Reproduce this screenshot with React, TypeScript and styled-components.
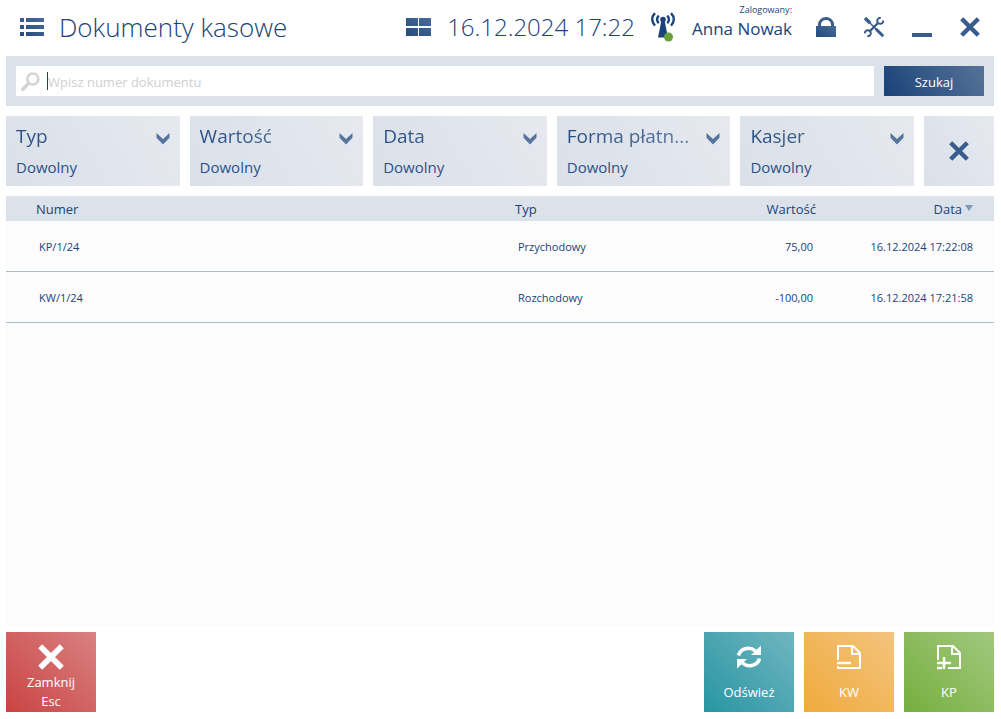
import React from 'react';
import styled, { createGlobalStyle } from 'styled-components';

const navy = '#1b4279';
const panel = '#dbe2ea';

const GlobalStyle = createGlobalStyle`
  *, *::before, *::after { box-sizing: border-box; }
  body {
    margin: 0;
    background: #fff;
    color: ${navy};
    font-family: "Open Sans", "Noto Sans", sans-serif;
    font-size: 13px;
  }
  button, input, select { font: inherit; color: inherit; }
`;

const Page = styled.div`
  min-height: 100vh;
  display: flex;
  flex-direction: column;
  padding: 0 7px 7px 6px;
`;

const Header = styled.header`
  height: 56px;
  display: flex;
  align-items: center;
  padding: 0 14px 2px;
`;

const Title = styled.h1`
  flex: 1;
  margin: 0 0 0 15px;
  font-size: 26px;
  line-height: 36px;
  font-weight: 300;
  white-space: nowrap;
`;

const Clock = styled.time`
  margin: 0 16px;
  font-size: 24px;
  line-height: 36px;
  font-weight: 300;
  white-space: nowrap;
`;

const User = styled.div`
  display: flex;
  flex-direction: column;
  align-items: flex-end;
  margin: 0 24px 0 16px;
  padding-bottom: 8px;
  white-space: nowrap;
`;

const UserCaption = styled.span`
  font-size: 9px;
  line-height: 12px;
`;

const UserName = styled.span`
  font-size: 17px;
  line-height: 26px;
`;

const WindowButtons = styled.div`
  display: flex;
  gap: 28px;
`;

const IconButton = styled.button`
  display: flex;
  padding: 0;
  border: 0;
  background: none;
  cursor: pointer;
`;

const SearchBar = styled.form`
  display: flex;
  gap: 10px;
  padding: 10px;
  background: ${panel};
`;

const SearchField = styled.label`
  flex: 1;
  display: flex;
  align-items: center;
  height: 30px;
  padding-left: 5px;
  background: #fff;
`;

const Caret = styled.span`
  width: 1px;
  height: 18px;
  margin-left: 7px;
  background: ${navy};
`;

const SearchInput = styled.input`
  flex: 1;
  min-width: 0;
  height: 30px;
  padding: 2px 0 0;
  border: 0;
  outline: 0;
  background: none;
  &::placeholder { color: #cfcfcf; opacity: 1; }
`;

const SearchButton = styled.button`
  width: 100px;
  padding: 2px 0 0;
  border: 0;
  color: #fff;
  background: linear-gradient(60deg, #1a4278, #567399);
  cursor: pointer;
`;

const Filters = styled.div`
  display: flex;
  gap: 10px;
  margin: 10px 0;
`;

const tileFill = 'linear-gradient(60deg, #dae1e9, #e0e4ec 50%, #e6e9ef)';

const FilterTile = styled.div`
  flex: 1;
  min-width: 0;
  height: 70px;
  display: grid;
  grid-template: 40px 22px / 1fr 14px;
  align-items: center;
  padding: 0 10px;
  background: ${tileFill};
`;

const FilterLabel = styled.label`
  overflow: hidden;
  font-size: 19px;
  line-height: 30px;
  white-space: nowrap;
  color: transparent;
  background: linear-gradient(90deg, #254b80, #6481a8);
  background-clip: text;
`;

const FilterSelect = styled.select`
  grid-column: 1 / 3;
  appearance: none;
  padding: 0;
  border: 0;
  background: none;
  color: #2c5186;
  font-size: 15px;
  line-height: 22px;
`;

const ChevronMark = styled.svg`
  margin-top: 6px;
`;

const ClearButton = styled.button`
  width: 70px;
  display: flex;
  align-items: center;
  justify-content: center;
  border: 0;
  background: ${tileFill};
  cursor: pointer;
`;

const List = styled.main`
  flex: 1;
  background: #fcfcfc;
`;

const Table = styled.table`
  width: 100%;
  table-layout: fixed;
  border-collapse: separate;
  border-spacing: 0;
`;

const Col = styled.col<{ $w?: number }>`
  width: ${p => (p.$w ? `${p.$w}px` : 'auto')};
`;

const Th = styled.th<{ $right?: boolean }>`
  height: 25px;
  padding: 0 ${p => (p.$right ? 8 : 0)}px 0 6px;
  background: ${panel};
  font-weight: 400;
  line-height: 18px;
  text-align: ${p => (p.$right ? 'right' : 'left')};
  &:first-child { padding-left: 30px; }
  &:last-child { padding-right: 21px; }
`;

const Td = styled.td<{ $right?: boolean }>`
  height: 51px;
  padding: 2px ${p => (p.$right ? 11 : 0)}px 0 9px;
  border-bottom: 1px solid #a9b9cc;
  font-size: 11px;
  line-height: 18px;
  text-align: ${p => (p.$right ? 'right' : 'left')};
  &:first-child { padding-left: 33px; }
  &:last-child { padding-right: 21px; }
`;

const SortMark = styled.svg`
  margin-left: 3px;
  vertical-align: 3px;
`;

const Footer = styled.footer`
  display: flex;
  gap: 10px;
  padding-top: 6px;
`;

const Spacer = styled.div`
  flex: 1;
`;

const Action = styled.button<{ $from: string; $to: string }>`
  width: 90px;
  height: 80px;
  display: flex;
  flex-direction: column;
  align-items: center;
  padding: 12px 0 0;
  border: 0;
  color: #fff;
  line-height: 19px;
  background: linear-gradient(45deg, ${p => p.$from}, ${p => p.$to});
  cursor: pointer;
`;

const ActionText = styled.span`
  flex: 1;
  display: flex;
  flex-direction: column;
  justify-content: center;
  padding-top: 2px;
`;

const Shade = ({ id }: { id: string }) => (
  <linearGradient id={id} x1="0" y1="1" x2="1" y2="0">
    <stop offset="0" stopColor="#234b80" />
    <stop offset="1" stopColor="#4a6b98" />
  </linearGradient>
);

const ListIcon = () => (
  <svg width="24" height="18" aria-hidden="true">
    <Shade id="g-list" />
    <path fill="url(#g-list)" d="M0 0h4v4H0zM6 0h18v4H6zM0 7h4v4H0zM6 7h18v4H6zM0 14h4v4H0zM6 14h18v4H6z" />
  </svg>
);

const GridIcon = () => (
  <svg width="25" height="18" aria-hidden="true">
    <Shade id="g-grid" />
    <path fill="url(#g-grid)" d="M0 0h12v8H0zM13 0h12v8H13zM0 10h12v8H0zM13 10h12v8H13z" />
  </svg>
);

const AntennaIcon = () => (
  <svg width="25" height="30" viewBox="0 0 25 30" aria-hidden="true">
    <g fill="none" stroke={navy} strokeWidth="2.400">
      <path d="M4 1.200C.3 4.800.3 10 4 13.600M20 1.200C23.700 4.800 23.700 10 20 13.600" />
      <path d="M7.800 3.600C5.500 5.800 5.500 9 7.800 11.200M16.200 3.600C18.500 5.800 18.500 9 16.200 11.200" />
    </g>
    <circle cx="12" cy="7.500" r="2.800" fill={navy} />
    <path d="M10.500 8h3L17 25.500H7z" fill={navy} />
    <circle cx="17.500" cy="25" r="4.500" fill="#69a039" />
  </svg>
);

const LockIcon = () => (
  <svg width="20" height="20" aria-hidden="true">
    <Shade id="g-lock" />
    <path d="M3.500 10V7.500a6.500 6 0 0 1 13 0V10" fill="none" stroke="#3a5d8e" strokeWidth="3" />
    <path d="M0 9h20v11H0z" fill="url(#g-lock)" />
  </svg>
);

const ToolsIcon = () => (
  <svg width="20" height="20" viewBox="0 0 20 20" aria-hidden="true">
    <g fill="none" stroke="#375b8d">
      <path d="M1 1l5 5" strokeWidth="3.400" />
      <path d="M5 5l8 8" strokeWidth="1.600" />
      <path d="M12.500 12.500l5.800 5.800" strokeWidth="3" strokeLinecap="round" />
      <path d="M5.500 14.500l9-9" strokeWidth="2.400" />
      <path d="M16.800.9a3 3 0 1 0 2.400 2.600M.8 16.400a3 3 0 1 1 2.500 2.800" strokeWidth="2" />
    </g>
  </svg>
);

const MinimizeIcon = () => (
  <svg width="20" height="20" aria-hidden="true">
    <path d="M0 16h20v4H0z" fill="#385c8e" />
  </svg>
);

const CrossIcon = ({ size, color }: { size: number; color: string }) => (
  <svg width={size} height={size} viewBox="0 0 20 20" aria-hidden="true">
    <path d="M1.700 1.700l16.600 16.600M18.300 1.700L1.700 18.300" stroke={color} strokeWidth="4.400" />
  </svg>
);

const SearchIcon = () => (
  <svg width="19" height="19" viewBox="0 0 19 19" aria-hidden="true">
    <circle cx="11.800" cy="7" r="5.500" fill="none" stroke="#d4d4d4" strokeWidth="2.600" />
    <path d="M7.500 11.500L1.800 17.200" stroke="#d4d4d4" strokeWidth="3.600" strokeLinecap="round" />
  </svg>
);

const Chevron = () => (
  <ChevronMark width="14" height="12" viewBox="0 0 14 12" aria-hidden="true">
    <path d="M.5 0L7 6l6.500-6v4.800L7 11.500.5 4.800z" fill="#56759e" />
  </ChevronMark>
);

const RefreshIcon = () => (
  <svg width="26" height="26" viewBox="0 0 26 26" aria-hidden="true">
    <path d="M2.500 11.500C4 5 13 1.500 19.500 7" fill="none" stroke="#fff" strokeWidth="3.600" />
    <path d="M25 1.500V11H15z" fill="#fff" />
    <path d="M23.500 14.500C22 21 13 24.500 6.500 19" fill="none" stroke="#fff" strokeWidth="3.600" />
    <path d="M1 24.500V15h10z" fill="#fff" />
  </svg>
);

const DocumentIcon = ({ plus }: { plus?: boolean }) => (
  <svg width="26" height="26" viewBox="0 0 26 26" fill="none" stroke="#fff" strokeWidth="2" aria-hidden="true">
    {plus ? (
      <>
        <path d="M2 16V2h15l7 7v15H12" />
        <path d="M1 19h14M8 13v12M1 24h5" strokeWidth="2.500" />
      </>
    ) : (
      <>
        <path d="M2 16V2h15l7 7v15H2v-2" />
        <path d="M1 19h14" strokeWidth="2.500" />
      </>
    )}
    <path d="M16 2v8h8" />
  </svg>
);

const filters = [
  { id: 'typ', name: 'Typ' },
  { id: 'wartosc', name: 'Wartość' },
  { id: 'data', name: 'Data' },
  { id: 'platnosc', name: 'Forma płatn...' },
  { id: 'kasjer', name: 'Kasjer' },
];

const documents = [
  { number: 'KP/1/24', type: 'Przychodowy', value: '75,00', date: '16.12.2024 17:22:08' },
  { number: 'KW/1/24', type: 'Rozchodowy', value: '-100,00', date: '16.12.2024 17:21:58' },
];

export default function App() {
  return (
    <Page>
      <GlobalStyle />
      <Header>
        <IconButton aria-label="Menu"><ListIcon /></IconButton>
        <Title>Dokumenty kasowe</Title>
        <IconButton aria-label="Pulpit"><GridIcon /></IconButton>
        <Clock dateTime="2024-12-16T17:22">16.12.2024 17:22</Clock>
        <AntennaIcon />
        <User>
          <UserCaption>Zalogowany:</UserCaption>
          <UserName>Anna Nowak</UserName>
        </User>
        <WindowButtons>
          <IconButton aria-label="Zablokuj"><LockIcon /></IconButton>
          <IconButton aria-label="Ustawienia"><ToolsIcon /></IconButton>
          <IconButton aria-label="Minimalizuj"><MinimizeIcon /></IconButton>
          <IconButton aria-label="Zamknij okno"><CrossIcon size={20} color="#385c8e" /></IconButton>
        </WindowButtons>
      </Header>

      <SearchBar onSubmit={e => e.preventDefault()}>
        <SearchField>
          <SearchIcon />
          <Caret />
          <SearchInput type="text" aria-label="Numer dokumentu" placeholder="Wpisz numer dokumentu" />
        </SearchField>
        <SearchButton type="submit">Szukaj</SearchButton>
      </SearchBar>

      <Filters>
        {filters.map(f => (
          <FilterTile key={f.id}>
            <FilterLabel htmlFor={f.id}>{f.name}</FilterLabel>
            <Chevron />
            <FilterSelect id={f.id}>
              <option>Dowolny</option>
            </FilterSelect>
          </FilterTile>
        ))}
        <ClearButton aria-label="Wyczyść filtry"><CrossIcon size={20} color="#385c8e" /></ClearButton>
      </Filters>

      <List>
        <Table>
          <colgroup>
            <Col />
            <Col $w={165} />
            <Col $w={150} />
            <Col $w={170} />
          </colgroup>
          <thead>
            <tr>
              <Th>Numer</Th>
              <Th>Typ</Th>
              <Th $right>Wartość</Th>
              <Th $right>
                Data
                <SortMark width="8" height="6" aria-hidden="true">
                  <path d="M0 0h8L4 6z" fill="#7f99b8" />
                </SortMark>
              </Th>
            </tr>
          </thead>
          <tbody>
            {documents.map(d => (
              <tr key={d.number}>
                <Td>{d.number}</Td>
                <Td>{d.type}</Td>
                <Td $right>{d.value}</Td>
                <Td $right>{d.date}</Td>
              </tr>
            ))}
          </tbody>
        </Table>
      </List>

      <Footer>
        <Action $from="#c94443" $to="#d98181">
          <CrossIcon size={26} color="#fff" />
          <ActionText><span>Zamknij</span><span>Esc</span></ActionText>
        </Action>
        <Spacer />
        <Action $from="#2895a3" $to="#70b6c0">
          <RefreshIcon />
          <ActionText>Odśwież</ActionText>
        </Action>
        <Action $from="#f0aa3c" $to="#f3c47e">
          <DocumentIcon />
          <ActionText>KW</ActionText>
        </Action>
        <Action $from="#75af3f" $to="#a2c87e">
          <DocumentIcon plus />
          <ActionText>KP</ActionText>
        </Action>
      </Footer>
    </Page>
  );
}
